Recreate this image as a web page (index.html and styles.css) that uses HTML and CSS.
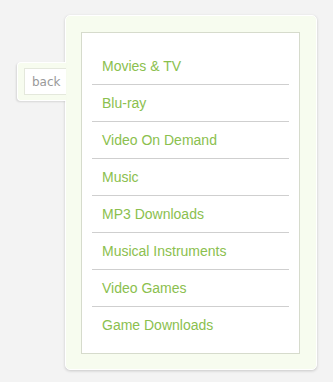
FILE: index.html
```html
<!DOCTYPE html>
<html>
<head>
<meta charset="utf-8">
<link rel="stylesheet" href="styles.css">
</head>
<body>
<div class="wrap">
  <div class="back-tab"><a class="back" href="#">back</a></div>
  <div class="panel">
    <ul class="menu">
      <li><a href="#">Movies &amp; TV</a></li>
      <li><a href="#">Blu-ray</a></li>
      <li><a href="#">Video On Demand</a></li>
      <li><a href="#">Music</a></li>
      <li><a href="#">MP3 Downloads</a></li>
      <li><a href="#">Musical Instruments</a></li>
      <li><a href="#">Video Games</a></li>
      <li><a href="#">Game Downloads</a></li>
    </ul>
  </div>
</div>
</body>
</html>
```
FILE: styles.css
```css
html, body {
  margin: 0;
  padding: 0;
  background: #f3f3f3;
  height: 100%;
}
.wrap {
  display: flex;
  align-items: flex-start;
  padding: 15px 0 0 17px;
}
.back-tab {
  margin-top: 47px;
  margin-right: -1px;
  position: relative;
  z-index: 1;
  background: #f7fcef;
  border: 1px solid #fff;
  border-right: none;
  border-radius: 4px 0 0 4px;
  padding: 5px 0 5px 6px;
  box-shadow: -1px 1px 2px rgba(0,0,0,0.12);
}
.back {
  display: block;
  width: 34px;
  height: 25px;
  line-height: 26px;
  padding-left: 7px;
  background: #fff;
  border: 1px solid #e4e8dc;
  border-right: none;
  font-family: "DejaVu Sans", sans-serif;
  font-size: 12px;
  color: #999;
  text-decoration: none;
}
.panel {
  width: 219px;
  background: #f7fcef;
  border: 1px solid #fff;
  border-radius: 5px;
  padding: 16px 16px 15px 15px;
  box-shadow: 0 1px 3px rgba(0,0,0,0.18);
}
.menu {
  list-style: none;
  margin: 0;
  padding: 15px 10px 10px 10px;
  background: #fff;
  border: 1px solid #d6dbcc;
}
.menu li {
  border-bottom: 1px solid #cfcfcf;
  margin: 0;
}
.menu li:last-child {
  border-bottom: none;
}
.menu a {
  display: block;
  height: 36px;
  line-height: 37px;
  padding-left: 10px;
  font-family: "Liberation Sans", Arial, sans-serif;
  font-size: 14px;
  color: #8bc04e;
  text-decoration: none;
}
```
